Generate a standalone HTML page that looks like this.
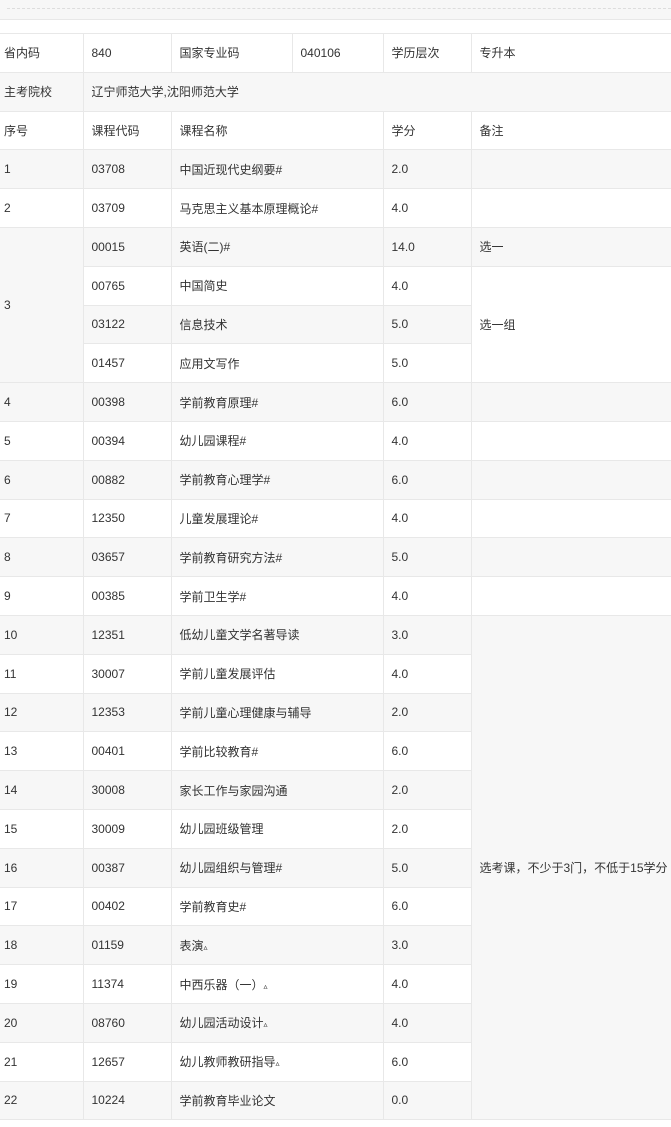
<!DOCTYPE html>
<html><head><meta charset="utf-8">
<style>
html,body{margin:0;padding:0;background:#fff;width:671px;height:1127px;overflow:hidden;font-family:"Liberation Sans","Noto Sans CJK SC",sans-serif;font-size:12px;color:#333;}
.top{position:absolute;left:0;top:0;width:671px;height:19px;background:#f7f7f7;border-bottom:1px solid #e8e8e8;overflow:hidden;}
.top .dash{position:absolute;left:7px;right:0;top:8px;border-top:1px dashed #ddd;}
.top .t{position:absolute;top:-2px;height:2px;background:#999;}
table{position:absolute;left:0;top:33px;border-collapse:collapse;table-layout:fixed;width:672px;}
td{border:1px solid #e8e8e8;padding:0 0 0 8px;height:37.8px;vertical-align:middle;white-space:nowrap;overflow:hidden;}
td:first-child{padding-left:4px;border-left:none;}
td.c{padding-left:8px !important;}
tr.g td{background:#f7f7f7;}
</style></head><body>
<div class="top"><div class="dash"></div>
<div class="t" style="left:16px;width:48px"></div>
<div class="t" style="left:92px;width:18px"></div>
<div class="t" style="left:373px;width:55px"></div>
<div class="t" style="left:455px;width:20px"></div>
</div>
<table>
<colgroup><col style="width:83px"><col style="width:88px"><col style="width:121px"><col style="width:91px"><col style="width:88px"><col style="width:201px"></colgroup>
<tr><td>省内码</td><td>840</td><td>国家专业码</td><td>040106</td><td>学历层次</td><td>专升本</td></tr>
<tr class="g"><td>主考院校</td><td colspan="5">辽宁师范大学,沈阳师范大学</td></tr>
<tr><td>序号</td><td>课程代码</td><td colspan="2">课程名称</td><td>学分</td><td>备注</td></tr>
<tr class="g"><td>1</td><td>03708</td><td colspan="2">中国近现代史纲要#</td><td>2.0</td><td></td></tr>
<tr><td>2</td><td>03709</td><td colspan="2">马克思主义基本原理概论#</td><td>4.0</td><td></td></tr>
<tr class="g"><td rowspan="4">3</td><td>00015</td><td colspan="2">英语(二)#</td><td>14.0</td><td>选一</td></tr>
<tr><td class="c">00765</td><td colspan="2">中国简史</td><td>4.0</td><td rowspan="3" style="background:#fff">选一组</td></tr>
<tr class="g"><td class="c">03122</td><td colspan="2">信息技术</td><td>5.0</td></tr>
<tr><td class="c">01457</td><td colspan="2">应用文写作</td><td>5.0</td></tr>
<tr class="g"><td>4</td><td>00398</td><td colspan="2">学前教育原理#</td><td>6.0</td><td></td></tr>
<tr><td>5</td><td>00394</td><td colspan="2">幼儿园课程#</td><td>4.0</td><td></td></tr>
<tr class="g"><td>6</td><td>00882</td><td colspan="2">学前教育心理学#</td><td>6.0</td><td></td></tr>
<tr><td>7</td><td>12350</td><td colspan="2">儿童发展理论#</td><td>4.0</td><td></td></tr>
<tr class="g"><td>8</td><td>03657</td><td colspan="2">学前教育研究方法#</td><td>5.0</td><td></td></tr>
<tr><td>9</td><td>00385</td><td colspan="2">学前卫生学#</td><td>4.0</td><td></td></tr>
<tr class="g"><td>10</td><td>12351</td><td colspan="2">低幼儿童文学名著导读</td><td>3.0</td><td rowspan="13">选考课，不少于3门，不低于15学分</td></tr>
<tr><td>11</td><td>30007</td><td colspan="2">学前儿童发展评估</td><td>4.0</td></tr>
<tr class="g"><td>12</td><td>12353</td><td colspan="2">学前儿童心理健康与辅导</td><td>2.0</td></tr>
<tr><td>13</td><td>00401</td><td colspan="2">学前比较教育#</td><td>6.0</td></tr>
<tr class="g"><td>14</td><td>30008</td><td colspan="2">家长工作与家园沟通</td><td>2.0</td></tr>
<tr><td>15</td><td>30009</td><td colspan="2">幼儿园班级管理</td><td>2.0</td></tr>
<tr class="g"><td>16</td><td>00387</td><td colspan="2">幼儿园组织与管理#</td><td>5.0</td></tr>
<tr><td>17</td><td>00402</td><td colspan="2">学前教育史#</td><td>6.0</td></tr>
<tr class="g"><td>18</td><td>01159</td><td colspan="2">表演<span style="font-size:8px">▵</span></td><td>3.0</td></tr>
<tr><td>19</td><td>11374</td><td colspan="2">中西乐器（一）<span style="font-size:8px">▵</span></td><td>4.0</td></tr>
<tr class="g"><td>20</td><td>08760</td><td colspan="2">幼儿园活动设计<span style="font-size:8px">▵</span></td><td>4.0</td></tr>
<tr><td>21</td><td>12657</td><td colspan="2">幼儿教师教研指导<span style="font-size:8px">▵</span></td><td>6.0</td></tr>
<tr class="g"><td>22</td><td>10224</td><td colspan="2">学前教育毕业论文</td><td>0.0</td></tr>
</table>
</body></html>
